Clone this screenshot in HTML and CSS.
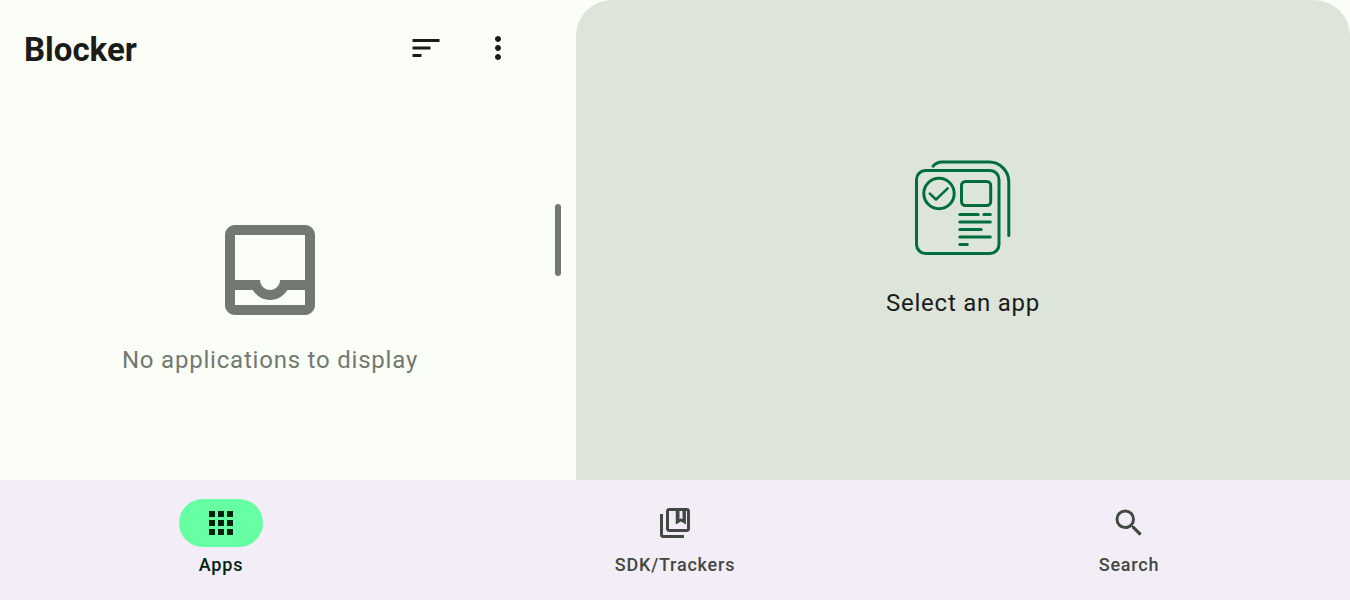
FILE: index.html
```html
<!DOCTYPE html>
<html lang="en">
<head>
<meta charset="utf-8">
<title>Blocker</title>
<link rel="stylesheet" href="styles.css">
</head>
<body>
<div class="app">
  <div class="panes">
    <section class="list-pane">
      <header class="top-bar">
        <h1 class="title">Blocker</h1>
        <button class="icon-button" aria-label="Sort"><svg class="icon" viewBox="0 0 24 24"><path d="M3 18h6v-2H3v2zM3 6v2h18V6H3zm0 7h12v-2H3v2z"/></svg></button>
        <button class="icon-button" aria-label="More"><svg class="icon" viewBox="0 0 24 24"><path d="M12 8c1.100 0 2-.9 2-2s-.9-2-2-2-2 .9-2 2 .9 2 2 2zm0 2c-1.100 0-2 .9-2 2s.9 2 2 2 2-.9 2-2-.9-2-2-2zm0 6c-1.100 0-2 .9-2 2s.9 2 2 2 2-.9 2-2-.9-2-2-2z"/></svg></button>
      </header>
      <div class="empty">
        <svg class="empty-icon" viewBox="0 0 24 24"><path d="M19 3H5c-1.100 0-2 .9-2 2v14c0 1.100.9 2 2 2h14c1.100 0 2-.9 2-2V5c0-1.100-.9-2-2-2zm0 16H5v-3h3.560c.69 1.190 1.970 2 3.450 2s2.750-.81 3.450-2H19v3zm0-5h-4.990c0 1.100-.9 2-2 2s-2-.9-2-2H5V5h14v9z"/></svg>
        <p class="message">No applications to display</p>
      </div>
    </section>
    <div class="divider"><span class="handle"></span></div>
    <section class="detail-pane">
      <svg class="detail-icon" viewBox="0 0 120 120">
        <rect x="13.500" y="22.500" width="82.500" height="83" rx="9"/>
        <path d="M30 18.200Q33.500 14 39 14H86A19.800 20 0 0 1 105.800 34V87.500"/>
        <circle cx="36" cy="45.500" r="15.200"/>
        <path d="M26.800 45.600L33 51.500L44.700 40.300" stroke-width="2.500"/>
        <rect x="58.500" y="33.500" width="29.200" height="24" rx="4"/>
        <path d="M56.800 66.500H75.200M80.800 66.500H87.300M56.800 74H87.300M56.800 81.500H78.200M56.800 89H87.300M56.800 96.500H64.300"/>
      </svg>
      <p class="message">Select an app</p>
    </section>
  </div>
  <nav class="nav-bar">
    <a class="nav-item selected">
      <span class="indicator"><svg class="icon" viewBox="0 0 24 24"><path d="M4 8h4V4H4v4zm6 12h4v-4h-4v4zm-6 0h4v-4H4v4zm0-6h4v-4H4v4zm6 0h4v-4h-4v4zm6-10v4h4V4h-4zm-6 4h4V4h-4v4zm6 6h4v-4h-4v4zm0 6h4v-4h-4v4z"/></svg></span>
      <span class="label">Apps</span>
    </a>
    <a class="nav-item">
      <span class="indicator"><svg class="icon" viewBox="0 0 24 24"><path d="M4 6H2v14c0 1.100.9 2 2 2h14v-2H4V6z"/><path fill-rule="evenodd" d="M20 2H8c-1.100 0-2 .9-2 2v12c0 1.100.9 2 2 2h12c1.100 0 2-.9 2-2V4c0-1.100-.9-2-2-2zM20 16H8V4h4.500v9L16 11l3.300 2V4H20zM15 4h2v5.500L16 8.800l-1 .7z"/></svg></span>
      <span class="label">SDK/Trackers</span>
    </a>
    <a class="nav-item">
      <span class="indicator"><svg class="icon" viewBox="0 0 24 24"><path d="M15.500 14h-.79l-.28-.27A6.471 6.471 0 0 0 16 9.500 6.500 6.500 0 1 0 9.500 16c1.610 0 3.090-.59 4.230-1.570l.27.28v.79l5 4.990L20.490 19l-4.990-5zm-6 0C7.010 14 5 11.990 5 9.500S7.010 5 9.500 5 14 7.010 14 9.500 11.990 14 9.500 14z"/></svg></span>
      <span class="label">Search</span>
    </a>
  </nav>
</div>
</body>
</html>
```
FILE: styles.css
```css
* { box-sizing: border-box; }
body { margin: 0; font-family: Roboto, sans-serif; background: #fbfdf7; color: #1a1c1a; }
.app { height: 600px; display: flex; flex-direction: column; overflow: hidden; }
.panes { flex: 1; display: flex; min-height: 0; }
.list-pane { width: 540px; display: flex; flex-direction: column; }
.top-bar { height: 96px; display: flex; align-items: center; padding: 0 6px 0 24px; }
.title { margin: 0; flex: 1; font-size: 33px; line-height: 42px; font-weight: 700; padding-top: 3px; }
.icon-button { width: 72px; height: 72px; padding: 0; border: 0; background: none; color: inherit; display: grid; place-items: center; }
.icon { width: 36px; height: 36px; display: block; fill: currentColor; }
.empty { flex: 1; display: flex; flex-direction: column; align-items: center; padding-top: 114px; color: #727971; }
.empty-icon { width: 120px; height: 120px; fill: currentColor; flex: none; }
.message { margin: 0; font-size: 24px; line-height: 36px; letter-spacing: 0.75px; }
.empty .message { margin-top: 12px; letter-spacing: 0.79px; }
.divider { width: 36px; display: grid; place-items: center; }
.handle { width: 6px; height: 72px; border-radius: 3px; background: #727971; }
.detail-pane { flex: 1; display: flex; flex-direction: column; align-items: center; padding-top: 148px; background: #dde5db; border-radius: 36px 36px 0 0; }
.detail-icon { width: 120px; height: 120px; flex: none; fill: none; stroke: #006d3b; stroke-width: 3; stroke-linecap: round; stroke-linejoin: round; }
.detail-pane .message { margin-top: 17px; }
.nav-bar { height: 120px; display: flex; gap: 12px; background: #f3edf7; }
.nav-item { flex: 1; display: flex; flex-direction: column; align-items: center; padding-top: 19px; color: #414942; }
.indicator { width: 84px; height: 48px; border-radius: 24px; display: grid; place-items: center; }
.label { margin-top: 6px; font-size: 18px; line-height: 24px; font-weight: 500; letter-spacing: 0.78px; }
.selected { color: #00210e; }
.selected .indicator { background: #67ffa3; }
```
